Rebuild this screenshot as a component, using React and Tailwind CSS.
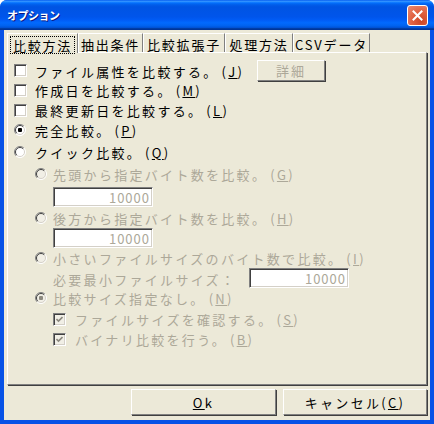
import React from 'react';

const font = "font-['Noto_Sans_CJK_JP','Noto_Sans_CJK_SC',sans-serif]";

const Check = ({ checked, disabled }) => (
    <span
        className={`relative w-[13px] h-[13px] shrink-0 border border-t-[#808080] border-l-[#808080] border-b-white border-r-white shadow-[inset_1px_1px_0_#404040,inset_-1px_-1px_0_#d4d0c8] ${disabled ? 'bg-[#f1efe6]' : 'bg-white'}`}
    >
        {checked && (
            <svg className="absolute left-[2px] top-[2px]" width="7" height="7" viewBox="0 0 7 7">
                <path d="M0.5 3 L2.5 5 L6.5 1" fill="none" stroke={disabled ? '#8d8a80' : '#000'} strokeWidth="1.6" />
            </svg>
        )}
    </span>
);

const Radio = ({ checked, disabled }) => (
    <svg width="12" height="12" viewBox="0 0 12 12" className="shrink-0">
        <circle cx="6" cy="6" r="5.5" fill={disabled ? '#f1efe6' : '#fff'} />
        <path d="M2.1 9.9 A5.5 5.5 0 0 1 9.9 2.1" fill="none" stroke="#808080" strokeWidth="1" />
        <path d="M9.9 2.1 A5.5 5.5 0 0 1 2.1 9.9" fill="none" stroke="#fff" strokeWidth="1" />
        <path d="M2.8 9.2 A4.5 4.5 0 0 1 9.2 2.8" fill="none" stroke="#404040" strokeWidth="1" />
        <path d="M9.2 2.8 A4.5 4.5 0 0 1 2.8 9.2" fill="none" stroke="#d4d0c8" strokeWidth="1" />
        {checked && <rect x="4" y="4" width="4" height="4" rx="1" fill={disabled ? '#8d8a80' : '#000'} />}
    </svg>
);

const NumBox = () => (
    <div className="w-[100px] h-[20px] bg-white border border-t-[#808080] border-l-[#808080] border-b-white border-r-white shadow-[inset_1px_1px_0_#404040,inset_-1px_-1px_0_#d4d0c8] flex items-center justify-end pr-[2px] text-[#aca899] tracking-[1px] text-[13px] leading-none">
        10000
    </div>
);

const Label = ({ children, disabled }) => (
    <span className={`text-[13px] leading-none tracking-[2.3px] whitespace-nowrap ${disabled ? 'text-[#aca899]' : 'text-black'}`}>
        {children}
    </span>
);

// mnemonic key, with a bit of extra room like the bitmap font in the original
const Key = ({ k }) => (
    <span className="ml-[3px]">
        (<u>{k}</u>)
    </span>
);

const tabs = [
    { name: '比較方法', w: 'w-[71px]', active: true },
    { name: '抽出条件', w: 'w-[65px]' },
    { name: '比較拡張子', w: 'w-[82px]' },
    { name: '処理方法', w: 'w-[68px]' },
    { name: 'CSVデータ', w: 'w-[77px]' },
];

const ClassicButton = ({ className, children }) => (
    <div
        className={`flex items-center justify-center bg-[#ece9d8] border border-t-white border-l-white border-b-[#808080] border-r-[#808080] shadow-[1px_1px_0_#404040] ${className}`}
    >
        {children}
    </div>
);

export default function App() {
    return (
        <div className={`w-[434px] h-[424px] flex flex-col bg-[#0752e6] rounded-t-[7px] overflow-hidden ${font}`}>
            {/* Title bar */}
            <div className="h-[30px] shrink-0 flex items-center pl-[7px] pr-[6px] bg-[linear-gradient(180deg,#0058ee_0%,#3593ff_4%,#288eff_6%,#127dff_8%,#036ffc_10%,#0262ee_14%,#0057e5_20%,#0054e3_24%,#0055eb_56%,#005bf5_66%,#026afe_76%,#0062ef_86%,#0052d6_92%,#0040ab_94%,#003092_100%)]">
                <span className="text-white font-bold text-[11px] tracking-[-0.5px] [text-shadow:1px_1px_0_#0a1883]">オプション</span>
                <div className="ml-auto w-[21px] h-[21px] rounded-[3px] border border-white bg-[radial-gradient(circle_at_70%_80%,#cc4626_0%,#e0603f_45%,#e98a72_100%)] flex items-center justify-center">
                    <svg width="11" height="11" viewBox="0 0 11 11">
                        <path d="M1.5 1.5 L9.5 9.5 M9.5 1.5 L1.5 9.5" stroke="#fff" strokeWidth="2" strokeLinecap="square" />
                    </svg>
                </div>
            </div>

            {/* Client area */}
            <div className="flex-1 mx-[4px] mb-[4px] bg-[#ece9d8] flex flex-col px-[3px] pt-[3px]">
                {/* Tabs */}
                <div className="h-[19px] flex shrink-0">
                    {tabs.map((t) => (
                        <div
                            key={t.name}
                            className={`${t.w} h-[19px] flex items-center justify-center pt-[3px] border-t border-l border-t-white border-l-white border-r border-r-[#808080] ${t.active ? 'relative z-10 h-[20px] bg-[#ece9d8]' : ''}`}
                        >
                            <span className={`text-[13px] leading-none tracking-[1.8px] whitespace-nowrap text-black ${t.active ? 'border border-dotted border-black px-[2px] pt-[2px] pb-[1px]' : ''}`}>
                                {t.name}
                            </span>
                        </div>
                    ))}
                </div>

                {/* Panel */}
                <div className="h-[333px] shrink-0 border border-t-white border-l-white border-b-[#808080] border-r-[#808080] shadow-[1px_1px_0_#404040] flex flex-col pl-[6px] pt-[7px]">
                    <div className="h-[20px] flex items-center">
                        <Check />
                        <span className="w-[230px] pl-[8px]">
                            <Label>ファイル属性を比較する。<Key k="J" /></Label>
                        </span>
                        <ClassicButton className="w-[68px] h-[21px]">
                            <span className="text-[13px] leading-none tracking-[2px] text-[#aca899]">詳細</span>
                        </ClassicButton>
                    </div>
                    <div className="h-[20px] flex items-center gap-[8px]">
                        <Check />
                        <Label>作成日を比較する。<Key k="M" /></Label>
                    </div>
                    <div className="h-[20px] flex items-center gap-[8px]">
                        <Check />
                        <Label>最終更新日を比較する。<Key k="L" /></Label>
                    </div>
                    <div className="h-[20px] flex items-center gap-[9px]">
                        <Radio checked />
                        <Label>完全比較。<Key k="P" /></Label>
                    </div>
                    <div className="h-[20px] mt-[2px] flex items-center gap-[9px]">
                        <Radio />
                        <Label>クイック比較。<Key k="Q" /></Label>
                    </div>

                    {/* Quick compare options */}
                    <div className="pl-[21px] flex flex-col">
                        <div className="h-[20px] mt-[2px] flex items-center gap-[6px]">
                            <Radio disabled />
                            <Label disabled>先頭から指定バイト数を比較。<Key k="G" /></Label>
                        </div>
                        <div className="pl-[18px] mt-[3px]">
                            <NumBox />
                        </div>
                        <div className="h-[20px] mt-[1px] flex items-center gap-[6px]">
                            <Radio disabled />
                            <Label disabled>後方から指定バイト数を比較。<Key k="H" /></Label>
                        </div>
                        <div className="pl-[18px]">
                            <NumBox />
                        </div>
                        <div className="h-[20px] flex items-center gap-[6px]">
                            <Radio disabled />
                            <Label disabled>小さいファイルサイズのバイト数で比較。<Key k="I" /></Label>
                        </div>
                        <div className="h-[20px] flex items-center pl-[18px]">
                            <span className="w-[196px]">
                                <Label disabled>必要最小ファイルサイズ：</Label>
                            </span>
                            <NumBox />
                        </div>
                        <div className="h-[20px] flex items-center gap-[6px]">
                            <Radio checked disabled />
                            <Label disabled>比較サイズ指定なし。<Key k="N" /></Label>
                        </div>
                        <div className="pl-[18px] flex flex-col">
                            <div className="h-[20px] mt-[1px] flex items-center gap-[9px]">
                                <Check checked disabled />
                                <Label disabled>ファイルサイズを確認する。<Key k="S" /></Label>
                            </div>
                            <div className="h-[20px] flex items-center gap-[9px]">
                                <Check checked disabled />
                                <Label disabled>バイナリ比較を行う。<Key k="B" /></Label>
                            </div>
                        </div>
                    </div>
                </div>

                {/* Buttons */}
                <div className="mt-[4px] flex justify-end gap-[7px]">
                    <ClassicButton className="w-[145px] h-[26px]">
                        <Label><u>O</u>k</Label>
                    </ClassicButton>
                    <ClassicButton className="w-[144px] h-[26px]">
                        <Label>キャンセル<span>(<u>C</u>)</span></Label>
                    </ClassicButton>
                </div>
            </div>
        </div>
    );
}
